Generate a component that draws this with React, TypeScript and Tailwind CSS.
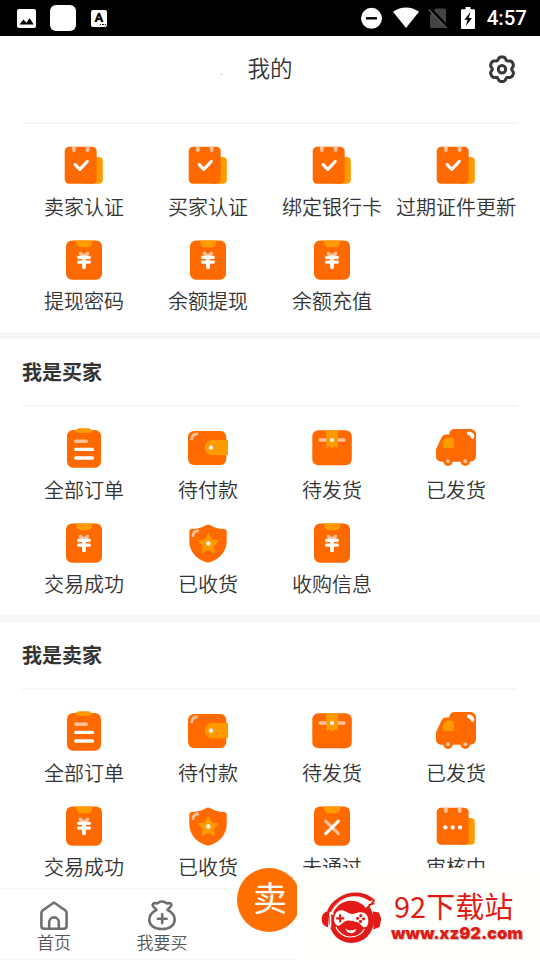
import React from "react";

const ORANGE = "#ff6a00";
const AMBER = "#ff9a00";
const PALE = "#ffc199";

type IconName = "cert" | "pending" | "pay" | "failed" | "order" | "wallet" | "box" | "truck" | "shield";

interface MenuItem {
  label: string;
  icon: IconName;
}

const accountItems: MenuItem[] = [
  { label: "卖家认证", icon: "cert" },
  { label: "买家认证", icon: "cert" },
  { label: "绑定银行卡", icon: "cert" },
  { label: "过期证件更新", icon: "cert" },
  { label: "提现密码", icon: "pay" },
  { label: "余额提现", icon: "pay" },
  { label: "余额充值", icon: "pay" },
];

const buyerItems: MenuItem[] = [
  { label: "全部订单", icon: "order" },
  { label: "待付款", icon: "wallet" },
  { label: "待发货", icon: "box" },
  { label: "已发货", icon: "truck" },
  { label: "交易成功", icon: "pay" },
  { label: "已收货", icon: "shield" },
  { label: "收购信息", icon: "pay" },
];

const sellerItems: MenuItem[] = [
  { label: "全部订单", icon: "order" },
  { label: "待付款", icon: "wallet" },
  { label: "待发货", icon: "box" },
  { label: "已发货", icon: "truck" },
  { label: "交易成功", icon: "pay" },
  { label: "已收货", icon: "shield" },
  { label: "未通过", icon: "failed" },
  { label: "审核中", icon: "pending" },
];

const Calendar = () => (
  <>
    <rect x="20" y="12" width="18.8" height="26.7" rx="4" fill={AMBER} />
    <rect x="0.7" y="1.7" width="32" height="37" rx="4.5" fill={ORANGE} />
    <path d="M8 1.7h3.8v3.4a1.9 1.9 0 0 1-3.8 0zM21.8 1.7h3.8v3.4a1.9 1.9 0 0 1-3.8 0z" fill={PALE} />
  </>
);

const Clipboard = () => (
  <>
    <rect x="2" y="0.5" width="36" height="39.2" rx="6" fill={ORANGE} />
    <path d="M12 0.5h16.3c0 4-2 6.8-5 6.8h-6.3c-3 0-5-2.8-5-6.8z" fill={AMBER} />
  </>
);

const icons: Record<IconName, React.ReactNode> = {
  cert: (
    <>
      <Calendar />
      <path d="M11.2 19.7l4.6 4.6 7.4-7.8" fill="none" stroke="#fff" strokeWidth="3.2" strokeLinecap="round" strokeLinejoin="round" />
    </>
  ),
  pending: (
    <>
      <Calendar />
      <circle cx="9.4" cy="21.4" r="2.1" fill="#fff" />
      <circle cx="16.7" cy="21.4" r="2.1" fill="#fff" />
      <circle cx="24" cy="21.4" r="2.1" fill="#fff" />
    </>
  ),
  pay: (
    <>
      <Clipboard />
      <path d="M16.4 13.4l3.6 3 3.6-3" fill="none" stroke={PALE} strokeWidth="3.4" strokeLinecap="round" />
      <path d="M14.6 17.3h10.8M14.6 22.1h10.8" fill="none" stroke="#fff" strokeWidth="3.2" strokeLinecap="round" />
      <path d="M20 17.3v10" fill="none" stroke="#fff" strokeWidth="3.8" strokeLinecap="round" />
    </>
  ),
  failed: (
    <>
      <Clipboard />
      <path d="M13.8 15.2l12.6 12.4" stroke={PALE} strokeWidth="3.2" strokeLinecap="round" />
      <path d="M26.4 15.2L13.8 27.6" stroke="#fff" strokeWidth="3.2" strokeLinecap="round" />
    </>
  ),
  order: (
    <>
      <rect x="3" y="2" width="34" height="37.7" rx="6" fill={ORANGE} />
      <path d="M10.7 2c2 0 2-1.8 4.5-1.8h9c2.5 0 2.5 1.8 4.5 1.8-1 1.9-2 2.8-4 2.8h-10c-2 0-3-.9-4-2.8z" fill={AMBER} />
      <path d="M11.7 13.3h10.6" stroke={PALE} strokeWidth="3.4" strokeLinecap="round" />
      <path d="M11.7 21.4h16.8M11.7 30h16.8" stroke="#fff" strokeWidth="3.4" strokeLinecap="round" />
    </>
  ),
  wallet: (
    <>
      <rect x="0" y="3" width="38.3" height="34" rx="6" fill={ORANGE} />
      <path d="M40 12v15.3H24.4a7.65 7.65 0 0 1 0-15.3z" fill={AMBER} />
      <circle cx="23" cy="19.7" r="2.1" fill="#fff" />
      <path d="M3.8 10.8c.3-2.6 2.2-4.5 4.9-4.8" fill="none" stroke={PALE} strokeWidth="3" strokeLinecap="round" />
    </>
  ),
  box: (
    <>
      <rect x="0.3" y="2.2" width="39.5" height="35" rx="6" fill={ORANGE} />
      <path d="M8 12h24" stroke={PALE} strokeWidth="3.4" strokeLinecap="round" />
      <path d="M14.3 2.2h11.7v18.2l-3-2-2.9 2-2.9-2-2.9 2z" fill={AMBER} />
      <circle cx="20.1" cy="12" r="2.1" fill="#fff" />
    </>
  ),
  truck: (
    <>
      <path
        d="M18.5 1h16a5.5 5.5 0 0 1 5.5 5.5v21.7a5.5 5.5 0 0 1-5.5 5.5H5a5 5 0 0 1-5-5v-5.2c0-1.5.2-2.5.8-3.9l4.7-10c1-2.1 2.3-3.1 4.5-3.1h3.3c.3-3.3 2.2-5.500 5.200-5.500z"
        fill={ORANGE}
      />
      <circle cx="12" cy="33.3" r="4.7" fill={ORANGE} />
      <circle cx="29.3" cy="33.3" r="4.7" fill={ORANGE} />
      <circle cx="12" cy="33.2" r="2" fill={PALE} />
      <circle cx="29.3" cy="33.2" r="2" fill={PALE} />
      <path d="M12.5 9.7h2.7a2.7 2.7 0 0 1 2.7 2.7v7.5H6.7v-3.2c0-4.5 1.8-7 5.8-7z" fill={AMBER} />
      <path d="M32.7 5.4c2.3.1 3.6 1.5 3.8 3.6" fill="none" stroke="#fff" strokeWidth="3.6" strokeLinecap="round" />
    </>
  ),
  shield: (
    <>
      <path
        d="M18.2 2c1.2-.8 2.6-.8 3.8 0 4.3 2.7 8.6 3.8 14 3.9 1.8 0 2.7.9 2.7 2.6v9.5c0 10-6.7 18.2-16.7 21.2-1.3.4-2.6.4-3.9 0C8 36.2 1.3 28 1.3 18V8.5c0-1.7.9-2.6 2.7-2.6 5.4-.1 9.900-1.200 14.200-3.900z"
        fill={ORANGE}
      />
      <path
        d="M20.3 11l2.9 6 6.5 1-4.7 4.6 1.1 6.5-5.8-3.1-5.8 3.1 1.1-6.5-4.7-4.6 6.5-1z"
        fill={AMBER}
        stroke={AMBER}
        strokeWidth="1.6"
        strokeLinejoin="round"
      />
      <circle cx="20.3" cy="20.5" r="2.2" fill="#fff" />
      <path d="M5 12.8c.2-3 1.8-4.6 4.7-4.8" fill="none" stroke={PALE} strokeWidth="2.8" strokeLinecap="round" />
    </>
  ),
};

const MenuGrid: React.FC<{ items: MenuItem[] }> = ({ items }) => (
  <div className="mx-[22px] grid grid-cols-4 gap-y-[17.5px] border-t-2 border-[#f6f6f6] pt-[21px] pb-[15.5px]">
    {items.map((item) => (
      <div key={item.label} className="flex flex-col items-center gap-[6.5px]">
        <svg className="h-10 w-10" viewBox="0 0 40 40">
          {icons[item.icon]}
        </svg>
        <span className="pb-[0.5px] text-[20px] leading-[30px] font-[350] whitespace-nowrap">{item.label}</span>
      </div>
    ))}
  </div>
);

const Section: React.FC<{ title: string; items: MenuItem[] }> = ({ title, items }) => (
  <section className="border-t-[7px] border-[#f6f6f6]">
    <h2 className="h-[66px] px-[22px] text-[20px] leading-[65px] font-bold">{title}</h2>
    <MenuGrid items={items} />
  </section>
);

const StatusBar = () => (
  <div className="flex h-9 shrink-0 items-center justify-between bg-black pr-[13px] pl-[17px] text-white">
    <div className="flex items-center">
      <svg className="h-[19px] w-[19px]" viewBox="0 0 19 19">
        <rect width="19" height="19" rx="2" fill="#fff" />
        <path d="M2.5 15.5l4-5 2.7 3.2 3.5-4.5 4 6.3z" fill="#000" />
      </svg>
      <div className="ml-3.5 h-[26px] w-[26px] rounded-md bg-white" />
      <div className="ml-[15px] flex h-[17px] w-4 flex-col items-center rounded-[2px] bg-white text-black">
        <span className="h-3.5 font-[Roboto] text-[13px] leading-[15px] font-black">A</span>
        <span className="flex gap-px self-end pr-px">
          <i className="h-[1.5px] w-[1.5px] bg-black" />
          <i className="h-[1.5px] w-[1.5px] bg-black" />
          <i className="h-[1.5px] w-[1.5px] bg-black" />
        </span>
      </div>
    </div>
    <div className="flex items-center">
      <svg className="h-[22px] w-[22px]" viewBox="0 0 22 22">
        <circle cx="10.5" cy="11.3" r="10.5" fill="#fff" />
        <path d="M5 11.3h11" stroke="#000" strokeWidth="2.4" />
      </svg>
      <svg className="ml-2.5 h-[22px] w-[26px]" viewBox="0 0 26 22">
        <path d="M0 4.8C7.8-1 18.2-1 26 4.8L13 21z" fill="#fff" />
      </svg>
      <svg className="ml-[9px] h-[22px] w-5" viewBox="0 0 20 22">
        <path d="M8 1.5h8.5a1.5 1.5 0 0 1 1.5 1.5v16.5a1.5 1.5 0 0 1-1.5 1.5h-13a1.5 1.5 0 0 1-1.5-1.5V7.5z" fill="#434343" />
        <path d="M2 1.5L19.5 20" stroke="#000" strokeWidth="3" />
        <path d="M.7 2.5L18.5 21" stroke="#555" strokeWidth="1.6" />
      </svg>
      <svg className="ml-[13px] h-[22px] w-3.5" viewBox="0 0 14 22">
        <path d="M4.5 0h5v2.2H13a1 1 0 0 1 1 1V21a1 1 0 0 1-1 1H1a1 1 0 0 1-1-1V3.2a1 1 0 0 1 1-1h3.5z" fill="#fff" />
        <path d="M9.5 5L3.3 12.7h3.2L4.9 19l6-8H7.7z" fill="#000" />
      </svg>
      <span className="ml-3 font-[Roboto] text-[20.5px] leading-9 font-medium">4:57</span>
    </div>
  </div>
);

const Gear = () => {
  // six-lobed outline, one lobe pointing straight up
  const outline = Array.from({ length: 72 }, (_, i) => {
    const a = (i * Math.PI) / 36;
    const r = 11.3 + 1.35 * Math.cos(6 * a) - 0.35 * Math.cos(12 * a);
    return `${(14 + r * Math.sin(a)).toFixed(2)},${(14.2 - r * Math.cos(a)).toFixed(2)}`;
  }).join(" ");
  return (
    <svg className="h-7 w-7 overflow-visible" viewBox="0 0 28 28" fill="none" stroke="#383838" strokeWidth="3" strokeLinejoin="round">
      <polygon points={outline} />
      <circle cx="14" cy="14.2" r="3.7" />
    </svg>
  );
};

const TabBar = () => (
  <nav className="relative flex h-[72px] shrink-0 border-t border-b border-[#f7f7f7] bg-white text-[17px] font-[350] text-[#555]">
    <div className="flex w-[108px] flex-col items-center pt-2.5">
      <svg className="h-8 w-[30px]" viewBox="0 0 30 32" fill="none" stroke="#6f6f6f" strokeWidth="2.6" strokeLinejoin="round">
        <path d="M15 3.5L3.9 11.2c-1 .8-1.5 1.7-1.5 3v12.8c0 1.7 1 2.7 2.7 2.7h19.8c1.7 0 2.7-1 2.7-2.7V14.2c0-1.3-.5-2.2-1.5-3z" />
        <path d="M10.2 29.5v-6.3a4.8 4.8 0 0 1 9.6 0V29.5" />
      </svg>
      <span className="leading-[22px]">首页</span>
    </div>
    <div className="flex w-[108px] flex-col items-center pt-2.5">
      <svg className="h-8 w-[30px]" viewBox="0 0 30 32" fill="none" stroke="#6f6f6f" strokeWidth="2.6" strokeLinejoin="round" strokeLinecap="round">
        <path d="M9.5 10.8L6.2 7.3C4.8 5.5 6.5 3.5 8.7 4.2c1 .3 1.7.2 2.7-.5 2.1-1.4 5.1-1.4 7.2 0 1 .7 1.7.8 2.7.5 2.2-.7 3.9 1.3 2.5 3.1l-3.300 3.500c4.300 2.300 7.200 5.700 7.200 9.700 0 5.800-5 9.500-12.700 9.500S2.300 26.300 2.300 20.500c0-4 2.900-7.400 7.200-9.700z" />
        <path d="M10.8 19.7h8.8M15.2 15.3v8.8" />
      </svg>
      <span className="leading-[22px]">我要买</span>
    </div>
    <div className="absolute -top-[21px] left-[237px] flex h-16 w-16 items-center justify-center rounded-full bg-[#ff6f00] text-[34px] leading-none font-normal text-white">
      <span className="ml-0.5 -mt-1.5">卖</span>
    </div>
  </nav>
);

const SiteBadge = () => (
  <div className="absolute top-[868px] left-[297px] flex h-[92px] w-[243px] items-start bg-[#fffffb] pl-6 text-[#df1b17]">
    <svg className="mt-6 h-[52px] w-[61px] shrink-0" viewBox="0 0 61 52">
      {/* headband and head */}
      <path d="M6 19C13 2 38-7 54 8l-3.5 2.3C37-1 16 4 9 21z" fill="#e21b18" />
      <circle cx="30.5" cy="28.5" r="22.5" fill="#e21b18" />
      <path d="M9.5 22C15 7 32 1 45 9.5c3 .5 5-.3 8-2.5l-8 9C34 6 20 9 12 23z" fill="#fffffb" />
      <path d="M12 21C18 8 33 5 43.5 14L41 17 17 24z" fill="#e21b18" />
      <path d="M8.5 19.5C5 18.5.5 22 .7 27.5c0 4 2.3 7 6.3 7.7zM52 19.5l6 1 2.2 6-1.5 8.5-6.2 2.5z" fill="#e21b18" />
      <path d="M9.5 20v15.5" stroke="#fffffb" strokeWidth="1.5" />
      <path d="M45.5 17l8-8.5M47.5 13l6-1.5" stroke="#e21b18" strokeWidth="1.7" />
      {/* gamepad */}
      <path
        d="M16.5 19.5c3.700-2.300 7-.9 10 1.100 2.500 1.700 5.500 1.700 8.200.7 5-1.900 10.300-1.200 12 3.700 1.300 3.900.6 10.200-2.800 10.300-3.200.1-4.500-4.800-8-5.400-3.800-.6-6.700-1.700-10.200-1.200-3.500.6-6.400 6.200-9.700 4.700-4-1.800-3.700-11 .5-13.900z"
        fill="#fffffb"
      />
      <path d="M19.2 22.3v8M15.2 26.300h8" stroke="#e21b18" strokeWidth="2.2" />
      <g fill="#e21b18">
        <circle cx="36.7" cy="26.3" r="1.6" />
        <circle cx="42.5" cy="26.8" r="1.6" />
        <circle cx="39.8" cy="23.7" r="1.6" />
        <circle cx="39.5" cy="29.4" r="1.6" />
      </g>
      <path d="M24.5 36.5c2 2.3 6.5 2.7 11 .6-1 3.2-3.5 4.4-6.2 4.100-2.500-.3-4.300-2-4.800-4.700z" fill="#fffffb" />
      <path d="M15 35c2 5.500 7.500 10 14 10 7 0 12-3.500 14.500-8" fill="none" stroke="#fffffb" strokeWidth="1.2" />
    </svg>
    <div className="mt-[17px] ml-[9px] flex flex-col">
      <span className="pl-[3px] text-[29px] leading-10 whitespace-nowrap">92下载站</span>
      <span className="font-[Inter] text-[16.5px] leading-[16px] font-black whitespace-nowrap [text-shadow:1px_1px_1px_#c9b9b9]">www.xz92.com</span>
    </div>
  </div>
);

export default function App() {
  return (
    <div className="relative flex h-[960px] w-[540px] flex-col overflow-hidden bg-white font-['Noto_Sans_CJK_SC',sans-serif] text-[#333]">
      <StatusBar />
      <header className="grid h-[66px] shrink-0 grid-cols-3 items-center px-6">
        <h1 className="relative col-start-2 text-center text-[22.5px] leading-[33px] font-[350]">
          <span className="relative -top-0.5">我的</span>
          <i className="absolute top-[21px] left-[33px] h-px w-px bg-[#aaa]" />
        </h1>
        <div className="justify-self-end">
          <Gear />
        </div>
      </header>
      <main className="min-h-0 flex-1 overflow-hidden pt-5">
        <MenuGrid items={accountItems} />
        <Section title="我是买家" items={buyerItems} />
        <Section title="我是卖家" items={sellerItems} />
      </main>
      <TabBar />
      <SiteBadge />
    </div>
  );
}
